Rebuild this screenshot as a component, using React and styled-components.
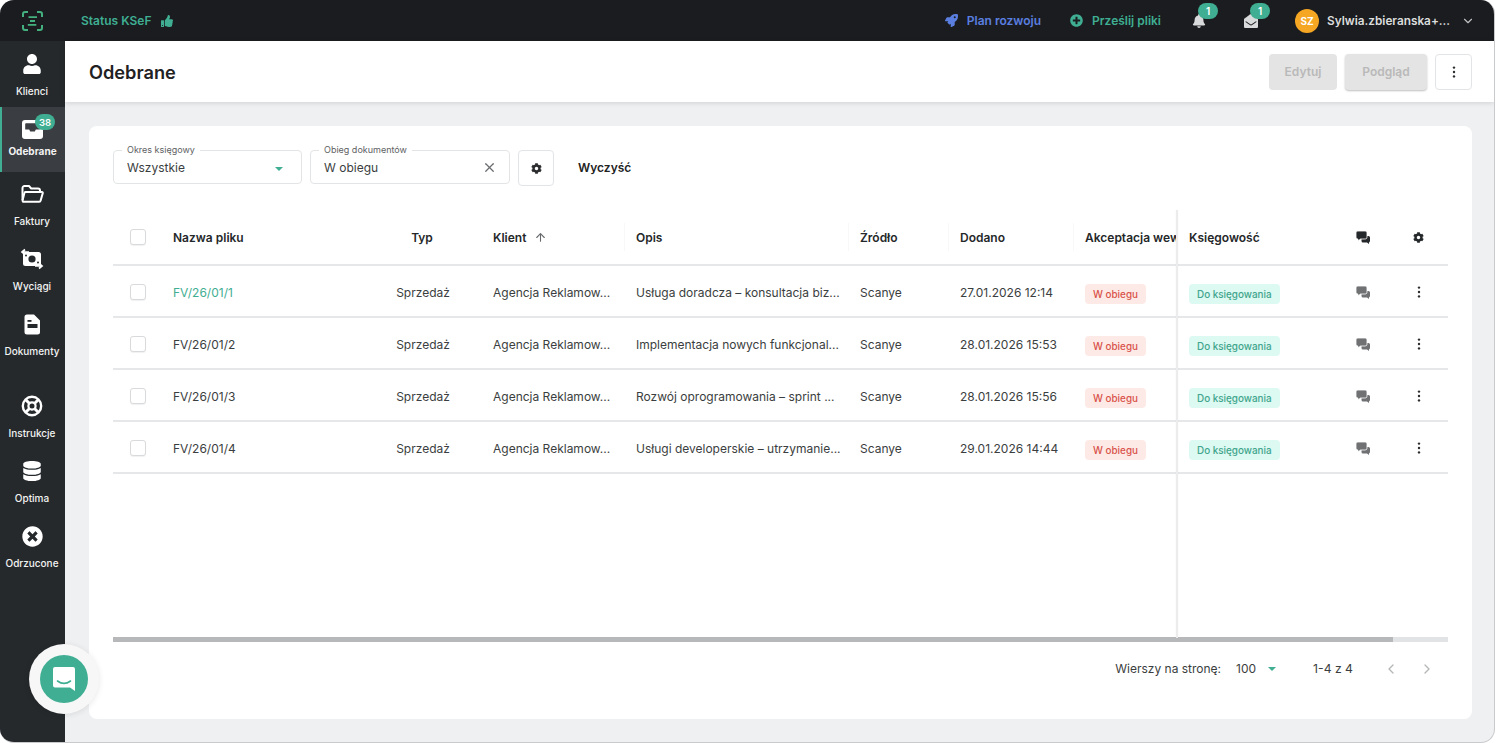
import React from "react";
import styled, { createGlobalStyle } from "styled-components";
import { FaUser, FaDatabase, FaTimesCircle, FaThumbsUp, FaRocket, FaPlusCircle, FaBell, FaEnvelopeOpen, FaCog } from "react-icons/fa";
import { FiChevronDown, FiChevronLeft, FiChevronRight, FiX, FiArrowUp } from "react-icons/fi";

const Global = createGlobalStyle`
  html, body { margin: 0; padding: 0; background: #fff; }
  * { box-sizing: border-box; }
  body { font-family: Inter, "Liberation Sans", sans-serif; color: #303335; }
`;

const Frame = styled.div`
  width: 1495px; height: 743px; border-radius: 14px; overflow: hidden;
  display: grid; grid-template-rows: 41px 1fr; grid-template-columns: 65px 1fr;
  background: #eff0f2; position: relative;
  border-right: 1px solid #c9cacc; border-bottom: 1px solid #c9cacc;
`;
const Topbar = styled.header`
  grid-column: 1 / -1; background: #1a1c1f; display: flex; align-items: center;
  padding-left: 22px; padding-right: 19px; font-size: 12px; font-weight: 600;
`;
const Status = styled.div`
  display: flex; align-items: center; gap: 10px; margin-left: 38px; color: #3fae92;
`;
const Spacer = styled.div` flex: 1; `;
const TopLink = styled.div`
  display: flex; align-items: center; gap: 9px; color: ${p => p.$color}; margin-right: ${p => p.$mr}px;
`;
const BellWrap = styled.div`
  position: relative; display: flex; width: 16px; margin-right: ${p => p.$mr}px; color: #d9dadb;
`;
const TopBadge = styled.span`
  position: absolute; left: 6px; top: -11px; width: 20px; height: 16px; border-radius: 9px;
  background: #3fae92; color: #fff; font-size: 10px; font-weight: 600;
  display: flex; align-items: center; justify-content: center;
`;
const Avatar = styled.div`
  width: 24px; height: 24px; border-radius: 50%; background: #f5a623; color: #fff;
  font-size: 10px; font-weight: 700; display: flex; align-items: center; justify-content: center;
  margin-right: 8px;
`;
const UserName = styled.span` color: #dcdddd; width: 134px; font-size: 11.8px; white-space: nowrap; `;
const UserChevron = styled(FiChevronDown)` color: #bfc0c2; `;

const Sidebar = styled.nav`
  background: #25292c; display: flex; flex-direction: column; align-items: stretch; padding-right: 1px;
`;
const NavItem = styled.div`
  height: ${p => p.$h}px; margin-top: ${p => p.$mt || 0}px; display: flex; flex-direction: column; align-items: center;
  justify-content: flex-end; padding-bottom: ${p => p.$pb ?? 15}px; gap: ${p => p.$gap ?? 9}px; position: relative;
  color: #f3f3f3; font-size: 10px; font-weight: ${p => p.$active ? 700 : 500};
  background: ${p => p.$active ? "#3a3d41" : "transparent"};
  border-left: ${p => p.$active ? "2px solid #3fae92" : "0"};
  padding-right: ${p => p.$active ? "2px" : "0"};
  margin-right: ${p => p.$active ? "-1px" : "0"};
`;
const NavIcon = styled.div`
  width: 24px; height: 24px; display: flex; align-items: center; justify-content: center; color: #fff;
`;
const NavBadge = styled.span`
  position: absolute; left: 33px; top: 7px; width: 20px; height: 16px; border-radius: 9px;
  background: #3fae92; color: #fff; font-size: 9.5px; font-weight: 600;
  display: flex; align-items: center; justify-content: center;
`;

const Main = styled.main` display: flex; flex-direction: column; min-height: 0; `;
const PageHeader = styled.div`
  height: 61px; background: #fff; display: flex; align-items: center; padding: 0 22px 0 24px;
  box-shadow: 0 1px 5px rgba(0,0,0,.13); gap: 8px; flex-shrink: 0;
`;
const Title = styled.h1` margin: 1px 0 0; flex: 1; font-size: 18.2px; font-weight: 600; color: #1f2123; `;
const DisabledBtn = styled.button`
  height: 36px; width: ${p => p.$w}px; border: 0; border-radius: 4px; background: #e4e4e4; color: #b9b9b9;
  font: 600 12px Inter, sans-serif; box-shadow: ${p => p.$raised ? "0 1px 2px rgba(0,0,0,.25)" : "none"};
`;
const IconBtn = styled.button`
  width: ${p => p.$w}px; height: 36px; border: 1px solid #e3e4e6; border-radius: 4px; background: #fff;
  display: flex; align-items: center; justify-content: center; padding: 0; color: #2a2c2e;
`;

const Card = styled.section`
  margin: 24px 22px 23px 24px; flex: 1; background: #fff; border-radius: 8px;
  padding: 24px 24px 0; display: flex; flex-direction: column; min-height: 0;
`;
const Filters = styled.div` display: flex; align-items: flex-start; gap: 8px; height: 60px; flex-shrink: 0; `;
const Field = styled.div`
  position: relative; width: ${p => p.$w}px; height: 34px; border: 1px solid #e3e4e6; border-radius: 4px;
  display: flex; align-items: center; justify-content: space-between; padding: 1px 18px 0 13px; font-size: 12px; color: #3b3e40;
`;
const Legend = styled.span`
  position: absolute; left: 8px; top: -7px; padding: 0 5px; background: #fff; font-size: 9px; line-height: 11px; color: #5e6163;
`;
const Caret = styled.span`
  width: 0; height: 0; border-left: 4px solid transparent; border-right: 4px solid transparent;
  border-top: 4.5px solid #3fae92; margin: ${p => p.$m || 0};
`;
const ClearIcon = styled(FiX)` color: #6a6d6f; margin: -1px -6px 0 0; `;
const Clear = styled.span` font-size: 12px; font-weight: 600; color: #222; margin: 10px 0 0 16px; `;

const TableWrap = styled.div` flex: 1; position: relative; min-height: 0; display: flex; flex-direction: column; `;
const Row = styled.div`
  display: grid; height: ${p => p.$h}px; flex-shrink: 0; align-items: center;
  grid-template-columns: 60px 190px 118px 143px 224px 100px 125px 104px 158px 56px 57px;
  border-bottom: 2px solid #e6e7e8; font-size: 12px; color: #3b3e40; padding-top: ${p => p.$pt || 0}px;
`;
const HeadRow = styled(Row)` font-weight: 600; color: #25282a; font-size: 12px; `;
const CheckCell = styled.div` padding-left: 17px; display: flex; `;
const Check = styled.span`
  width: 16px; height: 16px; border: 1px solid #d9dadc; border-radius: 3px; background: #fff;
  box-shadow: 0 1px 1px rgba(0,0,0,.06);
`;
const Cell = styled.div`
  padding-left: ${p => p.$pl ?? 12}px; white-space: nowrap; overflow: hidden; display: flex; align-items: center; gap: 8px;
  justify-content: ${p => p.$center ? "center" : "flex-start"};
  color: ${p => p.$green ? "#3fae92" : "inherit"};
`;
const HeadCell = styled(Cell)`
  height: 28px; border-left: 1px solid #f8f8f9;
`;
const TagCell = styled(Cell)` padding-top: 4px; `;
const Tag = styled.span`
  display: inline-flex; align-items: center; height: 20px; padding: 0 8px; border-radius: 4px; font-size: 9.9px; font-weight: 500;
  background: ${p => p.$kind === "red" ? "#fdeae7" : "#dcf9f2"};
  color: ${p => p.$kind === "red" ? "#d9534a" : "#3fa58c"};
`;
const IconCell = styled.div`
  display: flex; justify-content: center; padding-right: ${p => p.$pr || 0}px; color: ${p => p.$color || "#25282a"};
`;
const StickyLine = styled.div`
  position: absolute; left: 1063px; top: 0; bottom: 4px; width: 2px; background: #ececed; pointer-events: none;
  box-shadow: 0 0 2px rgba(0,0,0,.06);
`;
const ScrollTrack = styled.div` margin-top: auto; height: 5px; background: #e2e3e4; flex-shrink: 0; display: flex; `;
const ScrollThumb = styled.div` width: 1280px; background: #b7b8b9; `;
const Pager = styled.div`
  height: 77px; flex-shrink: 0; display: flex; align-items: center; justify-content: flex-end; font-size: 12px; color: #3b3e40;
  padding: 0 13px 24px 0;
`;
const PagerValue = styled.span` margin-left: 15px; `;
const PagerRange = styled.span` margin: 0 30px 0 37px; font-size: 12.2px; `;
const PagerArrow = styled.span` color: #b5b6b8; display: flex; margin-left: ${p => p.$ml || 0}px; `;

const Chat = styled.div`
  position: absolute; left: 29px; top: 644px; width: 70px; height: 70px; border-radius: 50%; background: #f7f7f7;
  display: flex; align-items: center; justify-content: center; box-shadow: 0 1px 6px rgba(0,0,0,.1);
`;
const ChatInner = styled.div`
  width: 48px; height: 48px; border-radius: 50%; background: #3fae92;
  display: flex; align-items: center; justify-content: center;
`;

const Logo = () => (
  <svg width="21" height="20" viewBox="0 0 21 20" fill="none" stroke="#44b07f" strokeWidth="2">
    <path d="M6 1H3a2 2 0 0 0-2 2v3M15 1h3a2 2 0 0 1 2 2v3M6 19H3a2 2 0 0 1-2-2v-3M15 19h3a2 2 0 0 0 2-2v-3" />
    <path d="M6.5 6.2h8.5M8 10h5M5.8 13.8h8.5" strokeWidth="1.8" />
  </svg>
);
const Inbox = () => (
  <svg width="21" height="19" viewBox="0 0 21 19" fill="#fff">
    <rect width="21" height="19" rx="3" />
    <path d="M4 3.2h13a.8.8 0 0 1 .8.8v5.5h-4l-1 2h-4.6l-1-2h-4V4a.8.8 0 0 1 .8-.8z" fill="#3a3d41" />
  </svg>
);
const Folder = () => (
  <svg width="23" height="18" viewBox="0 0 23 18" fill="none" stroke="#fff" strokeWidth="2" strokeLinejoin="round">
    <path d="M1.5 15V3A2 2 0 0 1 3.5 1H8l2.2 2.5H17A2 2 0 0 1 19 5.5V7" />
    <path d="M4.5 7H21a.8.8 0 0 1 .8 1l-2.2 7.6a1.5 1.5 0 0 1-1.4 1.2H2.8a1.2 1.2 0 0 1-1.2-1.6L3.4 8A1.2 1.2 0 0 1 4.5 7z" />
  </svg>
);
const Statement = () => (
  <svg width="24" height="22" viewBox="0 0 24 22" fill="none">
    <rect x="3" y="4" width="18" height="14" rx="2.5" fill="#fff" />
    <circle cx="12" cy="11" r="3.6" fill="#25292c" />
    <circle cx="6" cy="7.5" r="1" fill="#25292c" />
    <circle cx="18" cy="14.5" r="1" fill="#25292c" />
    <path d="M5 1.5L2 4l3 2.5M2 4h7M19 15.5l3 2.5-3 2.5M22 18h-7" stroke="#fff" strokeWidth="1.7" />
  </svg>
);
const Doc = () => (
  <svg width="17" height="21" viewBox="0 0 17 21" fill="#fff">
    <path d="M3 0.5h7l6 6v11.5a2.5 2.5 0 0 1-2.5 2.5h-10.5a2.5 2.5 0 0 1-2.5-2.5v-15a2.5 2.5 0 0 1 2.5-2.5z" />
    <rect x="3.5" y="10" width="10" height="4" fill="#25292c" />
    <rect x="3.5" y="6" width="4" height="1.8" fill="#25292c" />
  </svg>
);
const Ring = () => (
  <svg width="22" height="22" viewBox="0 0 22 22" fill="none" stroke="#fff">
    <circle cx="11" cy="11" r="9.2" strokeWidth="2.4" />
    <circle cx="11" cy="11" r="3.6" strokeWidth="2.2" />
    <path d="M4.5 4.5l4 4M17.5 4.5l-4 4M4.5 17.5l4-4M17.5 17.5l-4-4" strokeWidth="3" />
  </svg>
);
const Dots = ({ color = "#2a2c2e" }) => (
  <svg width="4" height="12" viewBox="0 0 4 12" fill={color}>
    <circle cx="2" cy="1.6" r="1.2" /><circle cx="2" cy="6" r="1.2" /><circle cx="2" cy="10.4" r="1.2" />
  </svg>
);
const Bubbles = () => (
  <svg width="14" height="13" viewBox="0 0 14 13" fill="currentColor">
    <path d="M7 5h5.5A1.5 1.5 0 0 1 14 6.5V10a1.5 1.5 0 0 1-1 1.4V13l-2-1.5H7A1.5 1.5 0 0 1 5.5 10V6.5A1.5 1.5 0 0 1 7 5z" />
    <path d="M1.8 0h7.4A1.8 1.8 0 0 1 11 1.8V6.2A1.8 1.8 0 0 1 9.2 8H4.5L2 10V8h-.2A1.8 1.8 0 0 1 0 6.2V1.8A1.8 1.8 0 0 1 1.8 0z" stroke="#fff" strokeWidth=".8" />
  </svg>
);
const ChatGlyph = () => (
  <svg width="24" height="26" viewBox="0 0 24 26" fill="none">
    <path d="M3 1h18a2 2 0 0 1 2 2v22l-5-3.5H3a2 2 0 0 1-2-2V3a2 2 0 0 1 2-2z" fill="#fff" />
    <path d="M5.5 15c4 3 9 3 13 0" stroke="#3fae92" strokeWidth="1.6" strokeLinecap="round" />
  </svg>
);

const nav = [
  { label: "Klienci", icon: <FaUser size={20} />, h: 66, pb: 10 },
  { label: "Odebrane", icon: <Inbox />, h: 65, active: true, badge: "38", gap: 4 },
  { label: "Faktury", icon: <Folder />, h: 70 },
  { label: "Wyciągi", icon: <Statement />, h: 65 },
  { label: "Dokumenty", icon: <Doc />, h: 65 },
  { label: "Instrukcje", icon: <Ring />, h: 65, mt: 17 },
  { label: "Optima", icon: <FaDatabase size={20} />, h: 65 },
  { label: "Odrzucone", icon: <FaTimesCircle size={21} />, h: 65 },
];

const rows = [
  ["FV/26/01/1", "Usługa doradcza – konsultacja biz...", "27.01.2026 12:14", true],
  ["FV/26/01/2", "Implementacja nowych funkcjonal...", "28.01.2026 15:53"],
  ["FV/26/01/3", "Rozwój oprogramowania – sprint ...", "28.01.2026 15:56"],
  ["FV/26/01/4", "Usługi developerskie – utrzymanie...", "29.01.2026 14:44"],
];

export default function App() {
  return (
    <Frame>
      <Global />
      <Topbar>
        <Logo />
        <Status>Status KSeF <FaThumbsUp size={12} /></Status>
        <Spacer />
        <TopLink $color="#5b7fe0" $mr={29}><FaRocket size={13} />Plan rozwoju</TopLink>
        <TopLink $color="#3fae92" $mr={31}><FaPlusCircle size={13} />Prześlij pliki</TopLink>
        <BellWrap $mr={36}><FaBell size={14} /><TopBadge>1</TopBadge></BellWrap>
        <BellWrap $mr={35}><FaEnvelopeOpen size={14} /><TopBadge>1</TopBadge></BellWrap>
        <Avatar>SZ</Avatar>
        <UserName>Sylwia.zbieranska+...</UserName>
        <UserChevron size={14} />
      </Topbar>
      <Sidebar>
        {nav.map(n => (
          <NavItem key={n.label} $h={n.h} $mt={n.mt} $pb={n.pb} $gap={n.gap} $active={n.active}>
            <NavIcon>{n.icon}</NavIcon>
            {n.label}
            {n.badge && <NavBadge>{n.badge}</NavBadge>}
          </NavItem>
        ))}
      </Sidebar>
      <Main>
        <PageHeader>
          <Title>Odebrane</Title>
          <DisabledBtn $w={68}>Edytuj</DisabledBtn>
          <DisabledBtn $w={82} $raised>Podgląd</DisabledBtn>
          <IconBtn $w={37}><Dots /></IconBtn>
        </PageHeader>
        <Card>
          <Filters>
            <Field $w={189}>
              <Legend>Okres księgowy</Legend>
              Wszystkie
              <Caret $m="3px 0 0 0" />
            </Field>
            <Field $w={200}>
              <Legend>Obieg dokumentów</Legend>
              W obiegu
              <ClearIcon size={15} />
            </Field>
            <IconBtn $w={36}><FaCog size={11} /></IconBtn>
            <Clear>Wyczyść</Clear>
          </Filters>
          <TableWrap>
            <HeadRow $h={56}>
              <CheckCell><Check /></CheckCell>
              <Cell $pl={0}>Nazwa pliku</Cell>
              <Cell $pl={0} $center>Typ</Cell>
              <Cell>Klient <FiArrowUp size={13} color="#66696b" /></Cell>
              <HeadCell $pl={11}>Opis</HeadCell>
              <HeadCell $pl={11}>Źródło</HeadCell>
              <HeadCell $pl={11}>Dodano</HeadCell>
              <HeadCell $pl={11}>Akceptacja wewnętrzna</HeadCell>
              <Cell>Księgowość</Cell>
              <IconCell><Bubbles /></IconCell>
              <IconCell $pr={3}><FaCog size={11} /></IconCell>
            </HeadRow>
            {rows.map(r => (
              <Row key={r[0]} $h={52} $pt={2}>
                <CheckCell><Check /></CheckCell>
                <Cell $pl={0} $green={r[3]}>{r[0]}</Cell>
                <Cell $pl={2} $center>Sprzedaż</Cell>
                <Cell>Agencja Reklamow...</Cell>
                <Cell>{r[1]}</Cell>
                <Cell>Scanye</Cell>
                <Cell>{r[2]}</Cell>
                <TagCell><Tag $kind="red">W obiegu</Tag></TagCell>
                <TagCell><Tag>Do księgowania</Tag></TagCell>
                <IconCell $color="#6f7173"><Bubbles /></IconCell>
                <IconCell $pr={2}><Dots /></IconCell>
              </Row>
            ))}
            <StickyLine />
            <ScrollTrack><ScrollThumb /></ScrollTrack>
          </TableWrap>
          <Pager>
            Wierszy na stronę:
            <PagerValue>100</PagerValue>
            <Caret $m="1px 0 0 12px" />
            <PagerRange>1-4 z 4</PagerRange>
            <PagerArrow><FiChevronLeft size={16} /></PagerArrow>
            <PagerArrow $ml={20}><FiChevronRight size={16} /></PagerArrow>
          </Pager>
        </Card>
      </Main>
      <Chat><ChatInner><ChatGlyph /></ChatInner></Chat>
    </Frame>
  );
}
